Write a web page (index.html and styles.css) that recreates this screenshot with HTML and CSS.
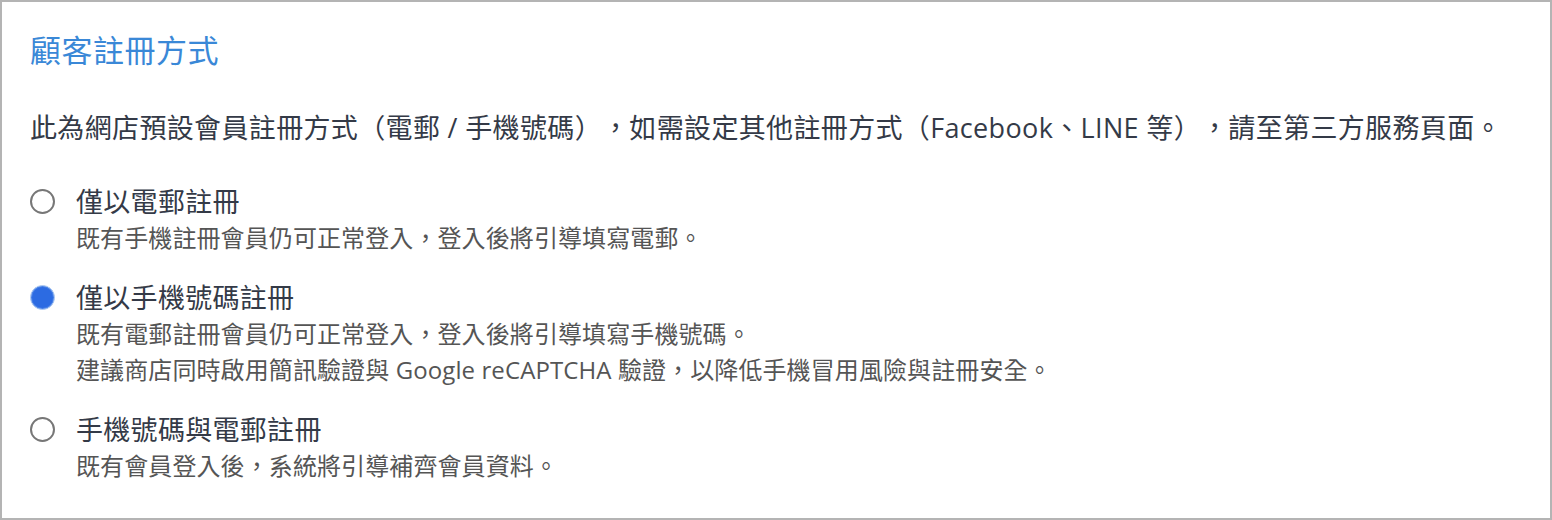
FILE: index.html
```html
<!DOCTYPE html>
<html lang="zh-Hant">
<head>
<meta charset="utf-8">
<title>顧客註冊方式</title>
<link rel="stylesheet" href="styles.css">
</head>
<body>
<div class="panel">
  <h2 class="title">顧客註冊方式</h2>
  <p class="desc">此為網店預設會員註冊方式（電郵 / 手機號碼），如需設定其他註冊方式（Facebook、LINE 等），請至第三方服務頁面。</p>
  <div class="options">
    <label class="option">
      <span class="radio"></span>
      <span class="text">
        <span class="label">僅以電郵註冊</span>
        <span class="sub">既有手機註冊會員仍可正常登入，登入後將引導填寫電郵。</span>
      </span>
    </label>
    <label class="option">
      <span class="radio checked"></span>
      <span class="text">
        <span class="label">僅以手機號碼註冊</span>
        <span class="sub">既有電郵註冊會員仍可正常登入，登入後將引導填寫手機號碼。</span>
        <span class="sub">建議商店同時啟用簡訊驗證與 Google reCAPTCHA 驗證，以降低手機冒用風險與註冊安全。</span>
      </span>
    </label>
    <label class="option">
      <span class="radio"></span>
      <span class="text">
        <span class="label">手機號碼與電郵註冊</span>
        <span class="sub">既有會員登入後，系統將引導補齊會員資料。</span>
      </span>
    </label>
  </div>
</div>
</body>
</html>
```
FILE: styles.css
```css
html, body {
  margin: 0;
  padding: 0;
  background: #ffffff;
}
body {
  font-family: "Open Sans", "Noto Sans CJK TC", sans-serif;
  text-spacing-trim: space-all;
}
.panel {
  box-sizing: border-box;
  width: 1552px;
  height: 520px;
  border: 2px solid #b4b4b4;
  padding: 28px 20px 0 28px;
}
.title {
  margin: 0;
  font-size: 31px;
  line-height: 40px;
  font-weight: 400;
  letter-spacing: 0.5px;
  color: #3a88d7;
}
.desc {
  margin: 38px 0 0 0;
  font-size: 27px;
  line-height: 40px;
  letter-spacing: 0.35px;
  color: #343a47;
}
.options {
  margin-top: 36px;
  display: flex;
  flex-direction: column;
  gap: 24px;
}
.option {
  display: flex;
  align-items: flex-start;
  gap: 21px;
}
.radio {
  box-sizing: border-box;
  flex: none;
  width: 25px;
  height: 25px;
  margin-top: 5px;
  border: 2px solid #777777;
  border-radius: 50%;
  background: #ffffff;
}
.radio.checked {
  border: 1px solid #b6d0f2;
  background: #2c6be2;
  box-shadow: inset 0 0 0 1px #4b83e8;
}
.text {
  display: flex;
  flex-direction: column;
}
.label {
  font-size: 27px;
  line-height: 36px;
  letter-spacing: 0.3px;
  color: #343a47;
}
.sub {
  font-size: 24px;
  line-height: 36px;
  letter-spacing: 0.1px;
  color: #555555;
}
```
